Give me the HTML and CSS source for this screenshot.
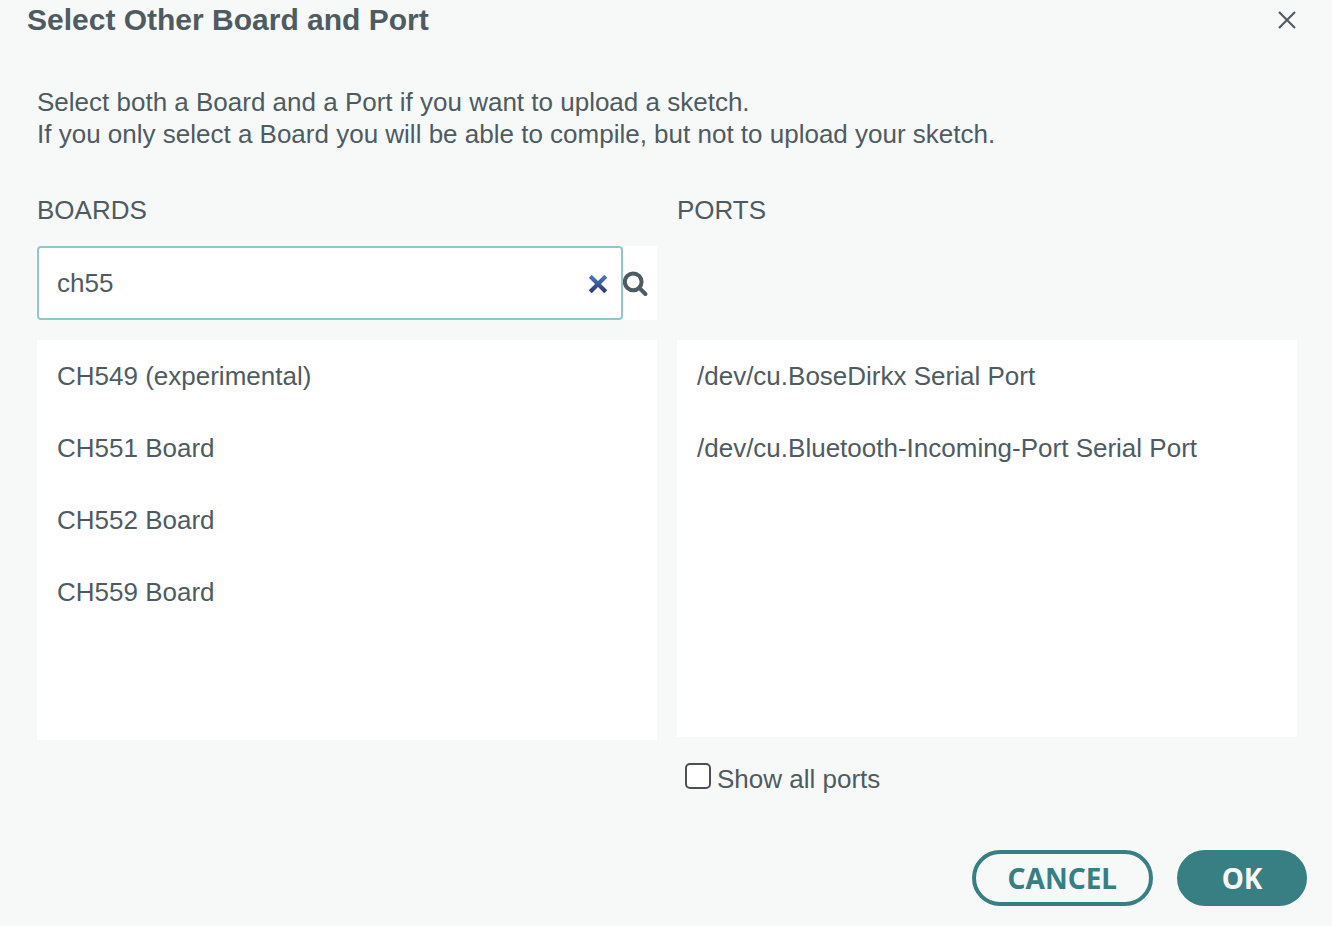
FILE: index.html
```html
<!DOCTYPE html>
<html lang="en">
<head>
<meta charset="utf-8">
<meta name="viewport" content="width=device-width, initial-scale=1">
<title>Select Other Board and Port</title>
<link rel="stylesheet" href="styles.css">
</head>
<body>
<main class="dialog" role="dialog" aria-labelledby="dialog-title">
  <header class="dialog-header">
    <h1 class="dialog-title" id="dialog-title">Select Other Board and Port</h1>
    <button class="icon-button" type="button" aria-label="Close">
      <svg width="18" height="18" viewBox="0 0 18 18" aria-hidden="true"><path d="M1 1l16 16M17 1L1 17" fill="none" stroke="#4e5b61" stroke-width="2.1"/></svg>
    </button>
  </header>
  <div class="dialog-body">
    <p class="intro">Select both a Board and a Port if you want to upload a sketch.<br>If you only select a Board you will be able to compile, but not to upload your sketch.</p>
    <div class="columns">
      <section class="column">
        <h2 class="column-title"><label for="board-search">BOARDS</label></h2>
        <div class="search">
          <div class="search-box">
            <input class="search-input" id="board-search" type="text" value="ch55">
            <button class="icon-button" type="button" aria-label="Clear search">
              <svg width="18" height="20" viewBox="0 0 18 20" aria-hidden="true">
                <defs><linearGradient id="clear-fill" gradientUnits="userSpaceOnUse" x1="0" y1="2" x2="0" y2="20"><stop offset="0" stop-color="#4a7cc4"/><stop offset="1" stop-color="#2a3670"/></linearGradient></defs>
                <path d="M2.7 4.7l12.6 12.6M15.3 4.7L2.7 17.3" fill="none" stroke="url(#clear-fill)" stroke-width="4.2" stroke-linecap="square" stroke-linejoin="round"/>
              </svg>
            </button>
          </div>
          <svg class="search-icon" width="25" height="28" viewBox="0 0 25 28" aria-hidden="true"><circle cx="10.2" cy="12.8" r="8.4" fill="none" stroke="#4e5b61" stroke-width="4"/><path d="M16.6 19.2l5.8 5.8" stroke="#4e5b61" stroke-width="4" stroke-linecap="round"/></svg>
        </div>
        <ul class="list boards-list">
          <li class="item">CH549 (experimental)</li>
          <li class="item">CH551 Board</li>
          <li class="item">CH552 Board</li>
          <li class="item">CH559 Board</li>
        </ul>
      </section>
      <section class="column">
        <h2 class="column-title">PORTS</h2>
        <ul class="list ports-list">
          <li class="item">/dev/cu.BoseDirkx Serial Port</li>
          <li class="item">/dev/cu.Bluetooth-Incoming-Port Serial Port</li>
        </ul>
        <div class="show-all">
          <input class="checkbox" id="show-all" type="checkbox">
          <label for="show-all">Show all ports</label>
        </div>
      </section>
    </div>
  </div>
  <footer class="dialog-footer">
    <button class="button button-secondary" type="button">CANCEL</button>
    <button class="button button-primary" type="button">OK</button>
  </footer>
</main>
</body>
</html>
```
FILE: styles.css
```css
* {
  box-sizing: border-box;
}

body {
  margin: 0;
  background: #f7f9f9;
  color: #4e5b61;
  font-family: "Liberation Sans", Arial, sans-serif;
  font-size: 26px;
  line-height: 32px;
}

.dialog {
  display: flex;
  flex-direction: column;
  min-height: 100vh;
  padding-bottom: 20px;
}

.dialog-header {
  display: flex;
  align-items: center;
  justify-content: space-between;
  height: 40px;
  padding: 0 36px 0 27px;
}

.dialog-title {
  margin: 0;
  font-size: 30px;
  font-weight: 700;
}

.icon-button {
  display: flex;
  padding: 0;
  border: 0;
  background: none;
  cursor: pointer;
}

.dialog-body {
  flex: 1;
  padding: 46px 35px 0 37px;
}

.intro {
  margin: 0 0 44px;
}

.columns {
  display: grid;
  grid-template-columns: 1fr 1fr;
  gap: 20px;
}

.column {
  display: flex;
  flex-direction: column;
  min-width: 0;
}

.column-title {
  margin: 0 0 20px;
  font-size: 26px;
  font-weight: 400;
}

.search {
  display: flex;
  align-items: center;
  height: 74px;
  margin-bottom: 20px;
  padding-right: 9px;
  background: #fff;
}

.search-box {
  display: flex;
  flex: 1;
  align-items: center;
  align-self: stretch;
  min-width: 0;
  padding: 0 14px 0 18px;
  border: 2px solid #8fc8cb;
  border-radius: 4px;
}

.search-input {
  flex: 1;
  min-width: 0;
  padding: 0;
  border: 0;
  outline: 0;
  background: none;
  color: inherit;
  font: inherit;
}

.search-icon {
  flex: none;
}

.list {
  margin: 0;
  padding: 0;
  background: #fff;
  list-style: none;
}

.boards-list {
  min-height: 400px;
}

.ports-list {
  min-height: 397px;
  margin-top: 94px;
}

.item {
  padding: 20px;
}

.show-all {
  display: flex;
  gap: 6px;
  margin-top: 26px;
  padding-left: 8px;
}

.checkbox {
  appearance: none;
  width: 26px;
  height: 26px;
  margin: 0;
  border: 2px solid #4f4f4f;
  border-radius: 5px;
  background: #fff;
}

.checkbox:checked {
  background: #377f82;
}

.dialog-footer {
  display: flex;
  justify-content: flex-end;
  gap: 24px;
  padding: 0 25px;
}

.button {
  height: 56px;
  min-width: 130px;
  padding: 0 32px;
  border: 4px solid #377f82;
  border-radius: 28px;
  font-family: "Noto Sans", "Open Sans", sans-serif;
  font-size: 28px;
  font-weight: 700;
  line-height: 32px;
  cursor: pointer;
}

.button-secondary {
  background: transparent;
  color: #377f82;
}

.button-primary {
  background: #377f82;
  color: #f7f9f9;
}
```
